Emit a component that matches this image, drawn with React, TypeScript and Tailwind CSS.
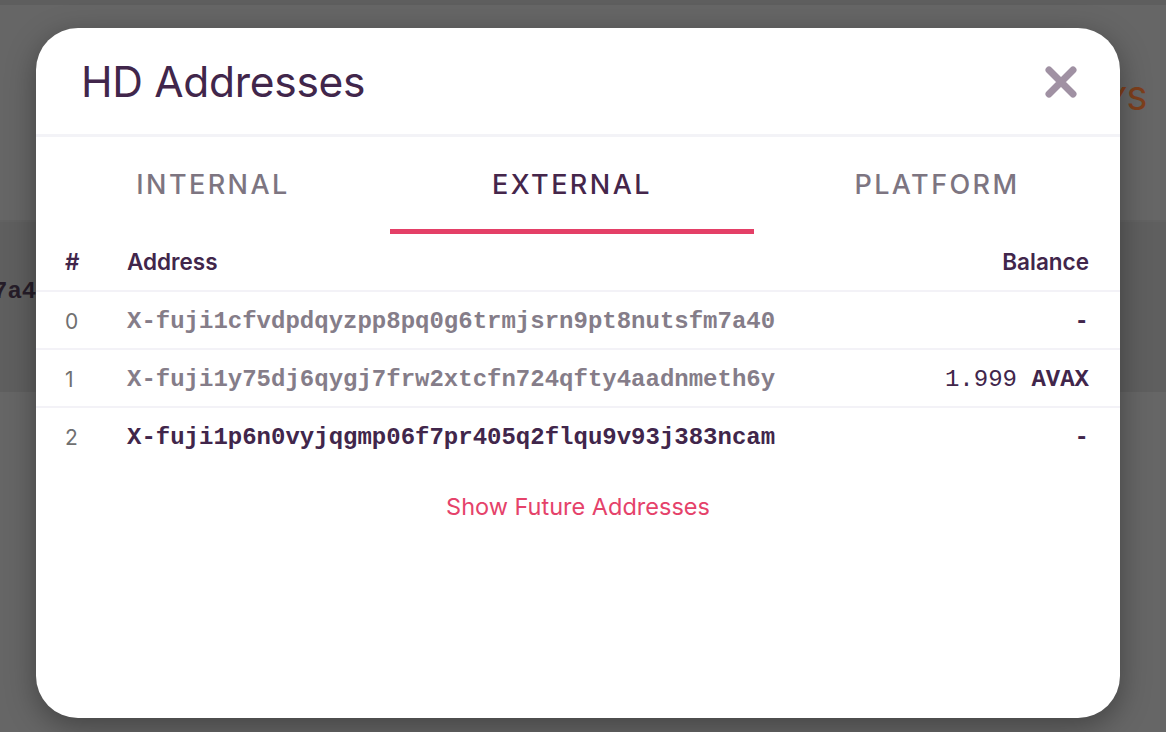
import React from 'react';

const rows = [
  { i: 0, addr: 'X-fuji1cfvdpdqyzpp8pq0g6trmjsrn9pt8nutsfm7a40', bal: null, used: true },
  { i: 1, addr: 'X-fuji1y75dj6qygj7frw2xtcfn724qfty4aadnmeth6y', bal: '1.999', used: true },
  { i: 2, addr: 'X-fuji1p6n0vyjqgmp06f7pr405q2flqu9v93j383ncam', bal: null, used: false },
];

const ui = "font-['Inter','Noto_Sans',sans-serif]";
const mono = "font-['Liberation_Mono','Courier_New',monospace]";

function CloseIcon() {
  return (
    <svg width="34" height="34" viewBox="0 0 34 34" fill="none">
      <path d="M5 5L29 29M29 5L5 29" stroke="#a091a3" strokeWidth="7" strokeLinecap="round" />
    </svg>
  );
}

export default function App() {
  return (
    <div className="relative w-[1166px] h-[732px] overflow-hidden bg-[#666666]">
      {/* dimmed page underneath */}
      <div className="flex flex-col">
        <div className="h-[5px] bg-[#5e5e5e]" />
        <div className="h-[215px] flex justify-end items-center pr-[19px] pb-[26px]">
          <span className={`${ui} text-[31px] font-medium text-[#7e3f1c]`}>KEYS</span>
        </div>
        <div className="h-[2px] bg-[#626262]" />
        <div className="h-[170px] bg-[#5f5f5f] flex items-start pt-[52px]">
          <span className={`${mono} text-[24px] font-bold text-[#261d29] -ml-[7px]`}>7a40</span>
        </div>
      </div>

      {/* modal */}
      <div className="absolute left-[36px] top-[28px] w-[1084px] h-[690px] rounded-[42px] bg-white shadow-[0_8px_30px_rgba(0,0,0,0.35)] overflow-hidden flex flex-col">
        <div className="h-[106px] flex items-center justify-between pl-[45px] pr-[42px] shrink-0">
          <h1 className={`${ui} text-[42.5px] text-[#41264b] mt-[1px] tracking-[-0.3px]`}>HD Addresses</h1>
          <button className="mt-[1px]"><CloseIcon /></button>
        </div>
        <div className="h-[3px] bg-[#f3f3f7] shrink-0" />

        {/* tabs */}
        <div className="grid grid-cols-[354px_364px_366px] h-[97px] shrink-0">
          {['INTERNAL', 'EXTERNAL', 'PLATFORM'].map((t) => {
            const active = t === 'EXTERNAL';
            return (
              <div key={t} className="flex flex-col items-center justify-end">
                <span className={`${ui} text-[27px] font-medium tracking-[0.09em] ${active ? 'text-[#45264b]' : 'text-[#7d7581]'}`}>{t}</span>
                <div className={`mt-[24px] h-[5px] w-full ${active ? 'bg-[#e43f67]' : 'bg-transparent'}`} />
              </div>
            );
          })}
        </div>

        {/* table */}
        <div className="flex flex-col">
          <div className={`${ui} h-[56px] flex items-center pl-[29px] pr-[31px] text-[22.5px] font-semibold text-[#41264b]`}>
            <span className="w-[62px]">#</span>
            <span className="flex-1">Address</span>
            <span>Balance</span>
          </div>
          {rows.map((r) => (
            <div key={r.i} className="border-t-2 border-[#f3f2f7]">
              <div className="h-[56px] flex items-center pt-[4px] pl-[29px] pr-[31px]">
                <span className={`${ui} w-[62px] text-[21px] text-[#707070]`}>{r.i}</span>
                <span className={`${mono} flex-1 text-[24px] font-bold ${r.used ? 'text-[#857d89]' : 'text-[#41264b]'}`}>{r.addr}</span>
                {r.bal ? (
                  <span className={`${mono} text-[24px] text-[#41264b]`}>
                    {r.bal} <span className="font-bold">AVAX</span>
                  </span>
                ) : (
                  <span className={`${mono} text-[24px] font-bold text-[#41264b]`}>-</span>
                )}
              </div>
            </div>
          ))}
          <div className="flex justify-center pt-[25px]">
            <button className={`${ui} text-[23.5px] text-[#e5426a]`}>Show Future Addresses</button>
          </div>
        </div>
      </div>
    </div>
  );
}
